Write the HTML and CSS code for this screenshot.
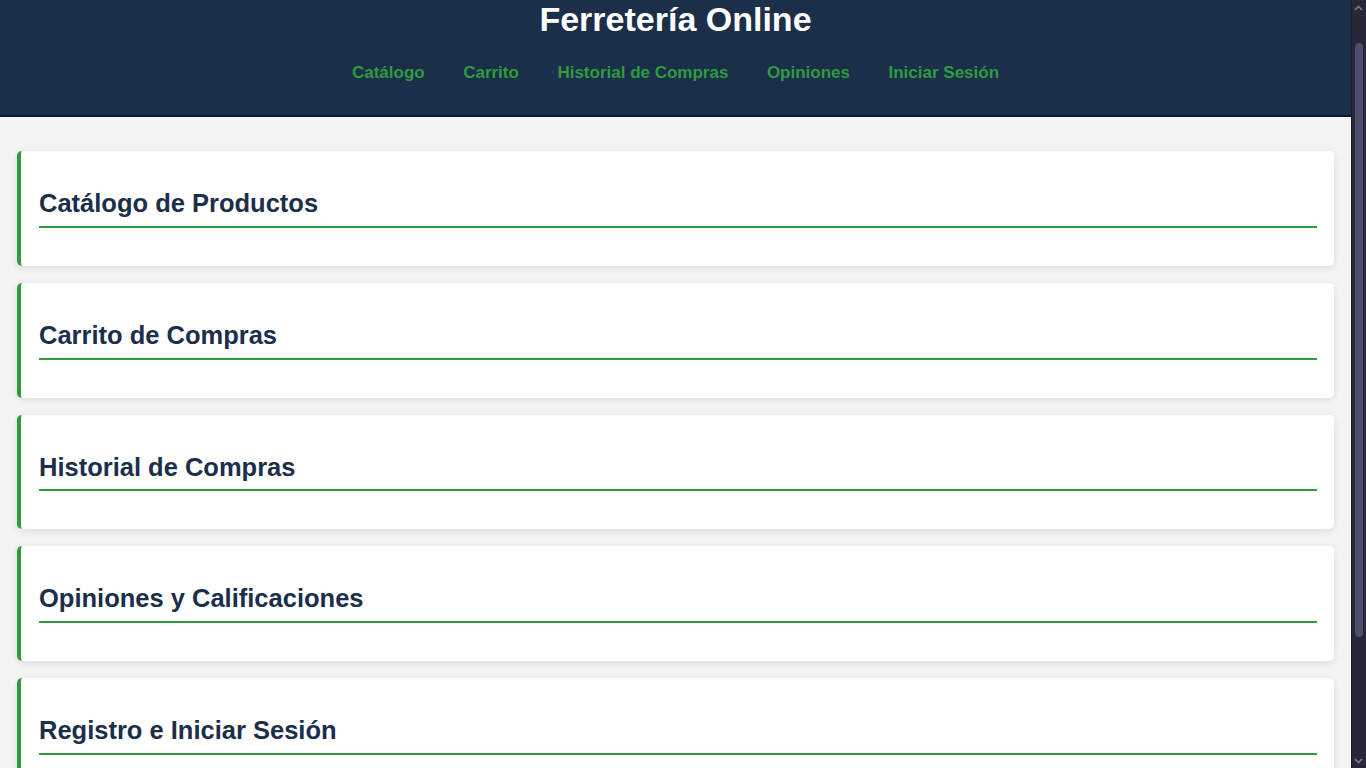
FILE: index.html
```html
<!DOCTYPE html>
<html lang="es">
<head>
<meta charset="utf-8">
<title>Ferretería Online</title>
<link rel="stylesheet" href="styles.css">
</head>
<body>
<header class="site-header">
  <h1 class="site-title">Ferretería Online</h1>
  <nav class="site-nav">
    <a href="#catalogo">Catálogo</a>
    <a href="#carrito">Carrito</a>
    <a href="#historial">Historial de Compras</a>
    <a href="#opiniones">Opiniones</a>
    <a href="#login">Iniciar Sesión</a>
  </nav>
</header>
<main class="content">
  <section class="card" id="catalogo"><h2 class="card-title">Catálogo de Productos</h2></section>
  <section class="card" id="carrito"><h2 class="card-title">Carrito de Compras</h2></section>
  <section class="card" id="historial"><h2 class="card-title">Historial de Compras</h2></section>
  <section class="card" id="opiniones"><h2 class="card-title">Opiniones y Calificaciones</h2></section>
  <section class="card" id="login"><h2 class="card-title">Registro e Iniciar Sesión</h2></section>
</main>
<div class="scrollbar" aria-hidden="true">
  <svg class="scroll-arrow up" width="9" height="6" viewBox="0 0 9 6"><path d="M1 5 L4.5 1.5 L8 5" stroke="#7a7d92" stroke-width="1.6" fill="none"/></svg>
  <div class="scroll-thumb"></div>
  <svg class="scroll-arrow down" width="9" height="6" viewBox="0 0 9 6"><path d="M1 1 L4.5 4.5 L8 1" stroke="#7a7d92" stroke-width="1.6" fill="none"/></svg>
</div>
</body>
</html>
```
FILE: styles.css
```css
html {
  background: #f4f4f4;
}
body {
  margin: 0 15px 0 0;
  font-family: "Liberation Sans", Arial, sans-serif;
  background: #f4f4f4;
  color: #1b2e4a;
}
.site-header {
  background: #1b2e4a;
  border-bottom: 2px solid #0b1240;
  height: 115px;
  box-sizing: content-box;
  text-align: center;
}
.site-title {
  margin: 0;
  font-size: 34px;
  line-height: 39px;
  font-weight: bold;
  color: #ffffff;
}
.site-nav {
  margin-top: 23.5px;
  display: flex;
  justify-content: center;
  gap: 38.5px;
}
.site-nav a {
  color: #2e9b3e;
  font-weight: bold;
  font-size: 17px;
  line-height: 19.5px;
  text-decoration: none;
}
.content {
  padding: 17px 17px 160px;
}
.card {
  background: #ffffff;
  border-left: 4px solid #2e9b3e;
  border-radius: 5px;
  box-shadow: 0 2px 8px rgba(0, 0, 0, 0.1);
  padding: 17px 17px 17px 18px;
  margin: 17px 0;
}
.card-title {
  margin: 21px 0;
  font-size: 25.5px;
  font-weight: bold;
  color: #1b2e4a;
  padding-bottom: 7.75px;
  border-bottom: 2px solid #2e9b3e;
}
.scrollbar {
  position: fixed;
  top: 0;
  right: 0;
  width: 15px;
  height: 100vh;
  background: #262838;
  border-left: 1px solid #1a1c28;
  box-sizing: border-box;
}
.scroll-arrow {
  position: absolute;
  left: 2px;
}
.scroll-arrow.up {
  top: 5px;
}
.scroll-arrow.down {
  bottom: 4px;
}
.scroll-thumb {
  position: absolute;
  top: 43px;
  left: 3px;
  width: 8px;
  height: 594px;
  border-radius: 4px;
  background: #4c4f6a;
}
```
